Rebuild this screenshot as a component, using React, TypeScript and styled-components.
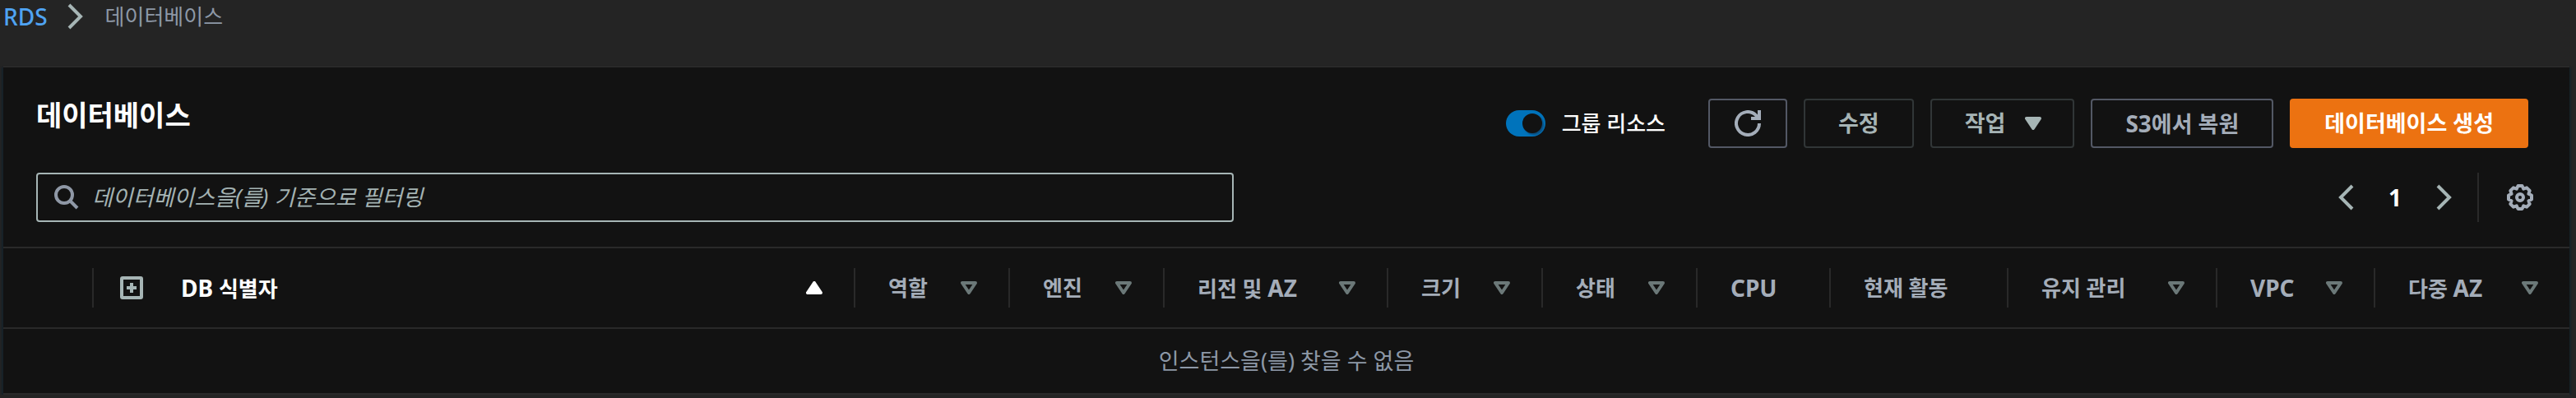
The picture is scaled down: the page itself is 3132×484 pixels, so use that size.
import React, { useState } from 'react';
import styled, { createGlobalStyle, css } from 'styled-components';

const GlobalStyle = createGlobalStyle`
  *, *::before, *::after { box-sizing: border-box; }
  body {
    margin: 0;
    background: #242424;
    color: #fff;
    font-family: "Noto Sans", "Noto Sans CJK KR", sans-serif;
    font-size: 26px;
    line-height: 40px;
  }
  button, input { font: inherit; color: inherit; }
  button { background: none; border: 0; padding: 0; cursor: pointer; }
`;

const Latin = styled.span`
  font-size: 28px;
`;

const Breadcrumbs = styled.nav`
  height: 80px;
  ol {
    display: flex;
    align-items: center;
    margin: 0;
    padding: 0 4px;
    list-style: none;
  }
  li { display: flex; align-items: center; }
`;

const CrumbLink = styled.a`
  color: #4fa3f2;
  font-size: 28px;
  font-weight: 500;
  text-decoration: none;
`;

const CrumbChevron = styled.span`
  display: flex;
  padding: 0 26px 0 24px;
`;

const CrumbCurrent = styled.span`
  color: #8d98a7;
`;

const Panel = styled.section`
  margin: 0 8px 0 4px;
  background: #121212;
  border-top: 2px solid #292929;
  border-bottom: 2px solid #292929;
  box-shadow: 0 2px 2px #17232a, 2px 2px 2px #17232a, -2px 2px 2px #17232a;
`;

const PanelHeader = styled.header`
  display: flex;
  flex-direction: column;
  gap: 30px;
  padding: 38px 40px 30px;
`;

const TitleRow = styled.div`
  display: flex;
  justify-content: space-between;
  align-items: flex-start;
  padding-right: 10px;
`;

const Title = styled.h1`
  margin: 0;
  font-size: 34px;
  font-weight: 700;
  line-height: 40px;
`;

const Actions = styled.div`
  display: flex;
  align-items: center;
  gap: 20px;
`;

const Toggle = styled.label`
  display: flex;
  align-items: center;
  gap: 20px;
  margin-right: 32px;
  font-weight: 500;
  cursor: pointer;
`;

const Switch = styled.input`
  appearance: none;
  display: flex;
  align-items: center;
  width: 48px;
  height: 32px;
  margin: 0;
  padding: 0 4px;
  border-radius: 16px;
  background: #545b64;
  &::before {
    content: '';
    width: 24px;
    height: 24px;
    border-radius: 50%;
    background: #121212;
    box-shadow: 2px 2px 2px #0b4d7c;
  }
  &:checked { background: #0073bb; justify-content: flex-end; }
`;

type Variant = 'normal' | 'muted' | 'primary';

const variants = {
  normal: css`border-color: #535865; color: #a4adb9;`,
  muted: css`border-color: #313637; color: #a6b4b5;`,
  primary: css`border-color: #ec7211; background: #ec7211; color: #fff;`,
};

const Button = styled.button<{ $variant: Variant }>`
  display: flex;
  align-items: center;
  height: 60px;
  padding: 0 40px;
  border: 2px solid;
  border-radius: 4px;
  font-size: 27px;
  font-weight: 700;
  white-space: nowrap;
  ${p => variants[p.$variant]}
`;

const MenuButton = styled(Button)`
  gap: 24px;
  padding-right: 38px;
`;

const IconButton = styled(Button)`
  justify-content: center;
  width: 96px;
  padding: 0;
`;

const ToolRow = styled.div`
  display: flex;
  justify-content: space-between;
  align-items: center;
`;

const SearchBox = styled.label`
  display: flex;
  align-items: center;
  gap: 16px;
  flex: 0 1 1456px;
  height: 60px;
  padding: 0 20px;
  border: 2px solid #a6b5b5;
  border-radius: 4px;
`;

const SearchInput = styled.input`
  flex: 1;
  min-width: 0;
  padding: 0;
  border: 0;
  outline: 0;
  background: none;
  font-size: 27px;
  &::placeholder { color: #a4b3b3; font-style: italic; opacity: 1; }
`;

const Pagination = styled.div`
  display: flex;
  align-items: center;
  height: 60px;
`;

const Pages = styled.div`
  display: flex;
  align-items: center;
  gap: 42px;
  height: 60px;
  padding-right: 30px;
  border-right: 2px solid #292929;
`;

const PlainButton = styled.button`
  display: flex;
  align-items: center;
`;

const PageNumber = styled(PlainButton)`
  font-size: 28px;
  font-weight: 700;
`;

const SettingsButton = styled(PlainButton)`
  padding: 0 4px 0 34px;
`;

const Table = styled.table`
  width: 100%;
  border-collapse: separate;
  border-spacing: 0;
  table-layout: fixed;
`;

const HeadCell = styled.th<{ $width?: number; $active?: boolean }>`
  width: ${p => (p.$width ? `${p.$width}px` : 'auto')};
  padding: 24px 0;
  border-top: 2px solid #292929;
  border-bottom: 2px solid #292929;
  color: ${p => (p.$active ? '#fff' : '#a4adb9')};
  font-weight: 700;
  text-align: left;
`;

const HeadContent = styled.div<{ $last?: boolean; $lead?: number }>`
  display: flex;
  align-items: center;
  gap: 46px;
  height: 48px;
  padding: 0 38px 0 ${p => p.$lead ?? 40}px;
  border-right: ${p => (p.$last ? '0' : '2px solid #292929')};
  white-space: nowrap;
`;

const SortButton = styled.button`
  display: flex;
  flex: 1;
  align-items: center;
  justify-content: space-between;
  font-weight: 700;
`;

const EmptyCell = styled.td`
  height: 78px;
  padding: 0;
  color: #8d98a7;
  font-size: 27px;
  text-align: center;
`;

const Chevron = ({ left }: { left?: boolean }) => (
  <svg width="20" height="32" viewBox="0 0 20 32" fill="none" stroke="#a6b5b5" strokeWidth="4">
    <path d={left ? 'M18 2 4 16 18 30' : 'M2 2 16 16 2 30'} />
  </svg>
);

const RefreshIcon = () => (
  <svg width="32" height="32" viewBox="0 0 32 32" fill="none" stroke="#a4adb9" strokeWidth="4">
    <path d="M30 16a14 14 0 1 1-4.100-9.900l3 3.500" />
    <path d="M30 0v10H20" />
  </svg>
);

const SearchIcon = () => (
  <svg width="30" height="30" viewBox="0 0 30 30" fill="none" stroke="#8f98a6" strokeWidth="4">
    <circle cx="12" cy="12" r="10" />
    <path d="m19 19 9 9" />
  </svg>
);

const GearIcon = () => (
  <svg width="32" height="32" viewBox="0 0 32 32" fill="none" stroke="#a4adb9" strokeWidth="4" strokeLinejoin="round">
    <path d="M13.500 2h5L20.200 5.600 24.100 4.300 27.700 7.900 26.400 11.800 30 13.500V18.500L26.400 20.200 27.700 24.100 24.100 27.700 20.200 26.400 18.500 30H13.500L11.800 26.400 7.900 27.700 4.300 24.100 5.600 20.200 2 18.500V13.500L5.600 11.800 4.300 7.900 7.900 4.300 11.800 5.600Z" />
    <circle cx="16" cy="16" r="4" />
  </svg>
);

const ExpandIcon = () => (
  <svg width="28" height="28" viewBox="0 0 28 28" fill="none" stroke="#a6b5b5" strokeWidth="4">
    <rect x="2" y="2" width="24" height="24" rx="1" />
    <path d="M14 8v12M8 14h12" />
  </svg>
);

const Caret = ({ kind }: { kind: 'up' | 'down' | 'hollow' }) => {
  const color = { up: '#fff', down: '#a6b5b5', hollow: '#6b7878' }[kind];
  return (
    <svg width="20" height="16" viewBox="0 0 20 16" stroke={color} strokeWidth="4" strokeLinejoin="round" fill={kind === 'hollow' ? 'none' : color}>
      <path d={kind === 'up' ? 'M2 14h16L10 2Z' : 'M2 2h16l-8 12Z'} />
    </svg>
  );
};

const columns: { id: string; label: React.ReactNode; width: number; sortable: boolean }[] = [
  { id: 'role', label: '역할', width: 188, sortable: true },
  { id: 'engine', label: '엔진', width: 188, sortable: true },
  { id: 'region', label: <span>리전 및 <Latin>AZ</Latin></span>, width: 272, sortable: true },
  { id: 'size', label: '크기', width: 188, sortable: true },
  { id: 'status', label: '상태', width: 188, sortable: true },
  { id: 'cpu', label: <Latin>CPU</Latin>, width: 162, sortable: false },
  { id: 'activity', label: '현재 활동', width: 216, sortable: false },
  { id: 'maintenance', label: '유지 관리', width: 254, sortable: true },
  { id: 'vpc', label: <Latin>VPC</Latin>, width: 192, sortable: true },
  { id: 'multi-az', label: <span>다중 <Latin>AZ</Latin></span>, width: 236, sortable: true },
];

export default function App() {
  const [grouped, setGrouped] = useState(true);
  return (
    <>
      <GlobalStyle />
      <Breadcrumbs aria-label="이동 경로">
        <ol>
          <li>
            <CrumbLink href="#rds">RDS</CrumbLink>
            <CrumbChevron><Chevron /></CrumbChevron>
          </li>
          <li><CrumbCurrent aria-current="page">데이터베이스</CrumbCurrent></li>
        </ol>
      </Breadcrumbs>
      <Panel>
        <PanelHeader>
          <TitleRow>
            <Title>데이터베이스</Title>
            <Actions>
              <Toggle>
                <Switch type="checkbox" role="switch" checked={grouped} onChange={e => setGrouped(e.target.checked)} />
                그룹 리소스
              </Toggle>
              <IconButton $variant="normal" aria-label="새로 고침"><RefreshIcon /></IconButton>
              <Button $variant="muted">수정</Button>
              <MenuButton $variant="muted">작업<Caret kind="down" /></MenuButton>
              <Button $variant="normal"><span><Latin>S3</Latin>에서 복원</span></Button>
              <Button $variant="primary">데이터베이스 생성</Button>
            </Actions>
          </TitleRow>
          <ToolRow>
            <SearchBox>
              <SearchIcon />
              <SearchInput type="text" aria-label="필터" placeholder="데이터베이스을(를) 기준으로 필터링" />
            </SearchBox>
            <Pagination>
              <Pages>
                <PlainButton aria-label="이전 페이지"><Chevron left /></PlainButton>
                <PageNumber>1</PageNumber>
                <PlainButton aria-label="다음 페이지"><Chevron /></PlainButton>
              </Pages>
              <SettingsButton aria-label="설정"><GearIcon /></SettingsButton>
            </Pagination>
          </ToolRow>
        </PanelHeader>
        <Table>
          <thead>
            <tr>
              <HeadCell $width={110}><HeadContent /></HeadCell>
              <HeadCell $active>
                <HeadContent $lead={32}>
                  <PlainButton aria-label="모두 펼치기"><ExpandIcon /></PlainButton>
                  <SortButton><span><Latin>DB</Latin> 식별자</span><Caret kind="up" /></SortButton>
                </HeadContent>
              </HeadCell>
              {columns.map((c, i) => (
                <HeadCell key={c.id} $width={c.width}>
                  <HeadContent $last={i === columns.length - 1}>
                    {c.sortable ? <SortButton>{c.label}<Caret kind="hollow" /></SortButton> : c.label}
                  </HeadContent>
                </HeadCell>
              ))}
            </tr>
          </thead>
          <tbody>
            <tr><EmptyCell colSpan={columns.length + 2}>인스턴스을(를) 찾을 수 없음</EmptyCell></tr>
          </tbody>
        </Table>
      </Panel>
    </>
  );
}
